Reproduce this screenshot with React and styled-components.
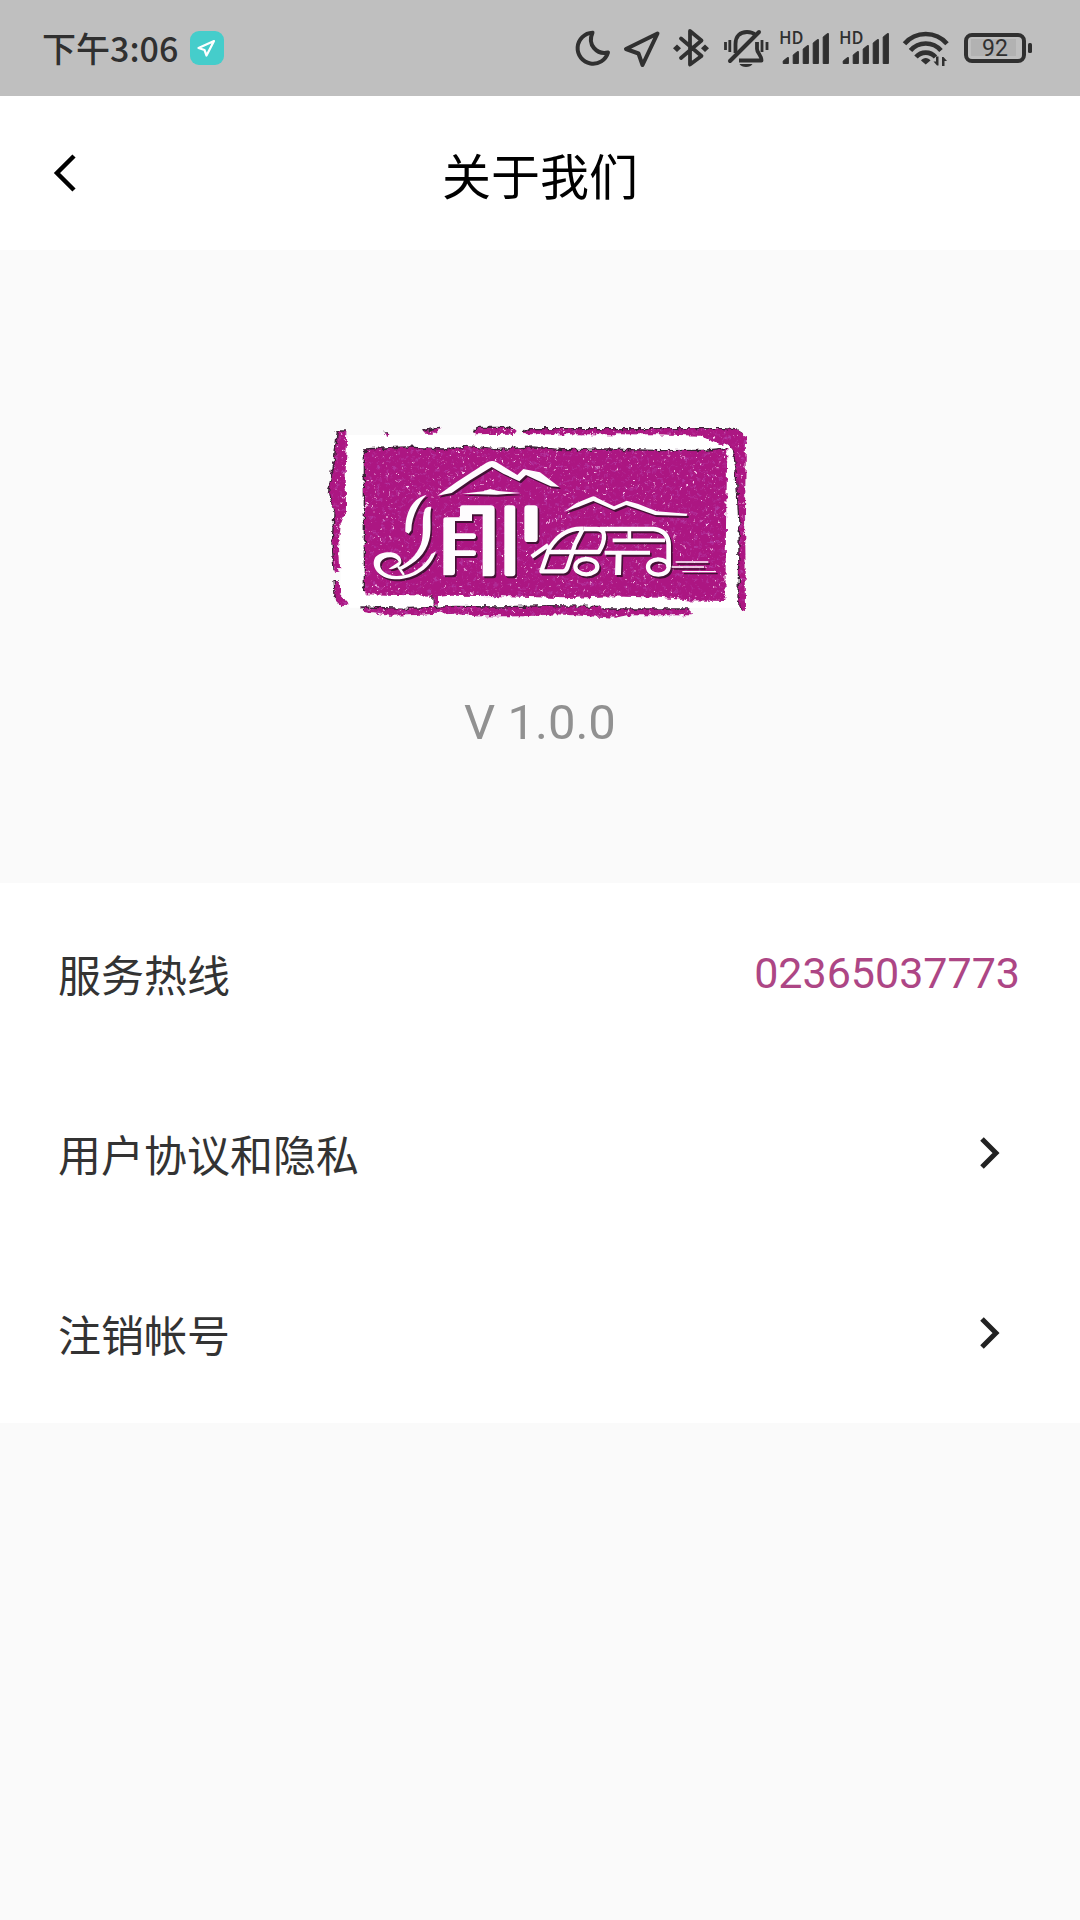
import React from 'react';
import styled, { createGlobalStyle } from 'styled-components';

const rows = [
    { id: 'terms', label: '用户协议和隐私' },
    { id: 'close', label: '注销帐号' },
]

const barTops = [33, 27, 21, 15, 9]

function Signal() {
    return (
        <Glyph $w={50} viewBox="0 0 50 48">
            <HdText x="-1" y="20">HD</HdText>
            {barTops.map((top, i) => (
                <path key={top} d={`M${3.2 + i * 10} 39.500V${top + 4}L${7.5 + i * 10} ${top + 0.5}h.900V39.500z`} stroke="#303030" strokeLinejoin="round" />
            ))}
        </Glyph>
    )
}

function StatusBar() {
    return (
        <StatusRow>
            <StatusGroup $gap={12}>
                <Clock>下午3:06</Clock>
                <Badge viewBox="0 0 34 34">
                    <path d="M24 10 8.500 17l6 2 2 5.500z" fill="none" stroke="#fff" strokeWidth="2.200" strokeLinejoin="round" />
                </Badge>
            </StatusGroup>
            <StatusGroup $gap={10}>
                <Glyph $w={38} viewBox="0 0 38 48">
                    <path d="M18.500 8.700A15.500 15.500 0 1 0 34 28.500C23 31 13 21 18.500 8.700z" fill="none" stroke="#303030" strokeWidth="4" strokeLinejoin="round" />
                </Glyph>
                <Glyph $w={40} viewBox="0 0 40 48">
                    <path d="M35.500 9.500 4 25l12.500 4.500L20.500 41z" fill="none" stroke="#303030" strokeWidth="4" strokeLinejoin="round" />
                </Glyph>
                <Glyph $w={38} viewBox="0 0 38 48">
                    <path d="M9 14.500 29.500 32 18 40.500V7l11.500 9.500L9 34" fill="none" stroke="#303030" strokeWidth="3.800" strokeLinejoin="round" strokeLinecap="round" />
                    <path d="M1 24.200l4-3.700 4 3.700-4 3.700zM29 24.200l4-3.700 4 3.700-4 3.700z" />
                </Glyph>
                <Glyph $w={50} viewBox="0 0 50 48">
                    <g fill="none" stroke="#303030">
                        <path d="M5.500 18v8M9.800 16v12M42 16v12M47 18v8" strokeWidth="2.800" />
                        <path d="M15.500 29V20C15.500 12 20 8 27 8c4 0 6.500 1 8.500 3" strokeWidth="3.800" />
                        <path d="M37 18v7c0 4 4.500 6 4.500 11.500H19" strokeWidth="3.800" strokeLinejoin="round" />
                        <path d="M10 37 39 8" strokeWidth="4" strokeLinecap="round" />
                    </g>
                    <path d="M19.500 40h13c-2 4-11 4-13 0z" />
                </Glyph>
                <Signal />
                <Signal />
                <Glyph $w={52} viewBox="0 0 52 48">
                    <g fill="none" stroke="#303030" strokeWidth="4.600">
                        <path d="M4.500 19.700A28 28 0 0 1 47 19.700" />
                        <path d="M10.500 26.500A20 20 0 0 1 41 26.500" />
                        <path d="M16 33a13 13 0 0 1 19.500 0" />
                    </g>
                    <path d="M25.700 40.500 21 36.500c2-3.500 7.500-3.500 9.500 0z" />
                    <path d="M38.500 32.500v9h-1.500L33.500 37.500h2.500v-5zM42 42v-9H43.500l3.500 4H44.500v5z" />
                </Glyph>
                <Glyph $w={72} viewBox="0 0 72 48">
                    <rect x="4" y="11" width="58" height="26" rx="6" fill="none" stroke="#303030" strokeWidth="4" />
                    <rect x="9" y="15" width="45" height="17" fill="#b2b2b2" />
                    <rect x="66" y="19" width="4" height="10" rx="1.500" />
                    <BatteryText x="33" y="32" textAnchor="middle">92</BatteryText>
                </Glyph>
            </StatusGroup>
        </StatusRow>
    )
}

// white strokes of the seal, drawn twice: once as shadow, once on top
function SealStrokes() {
    return (
        <g fill="none" strokeLinejoin="round">
            <g fill="currentColor" stroke="none">
                <path d="M382 254 440 213 528 156Q545 145 560 154L622 192 640 174 690 184 748 228 722 226 680 207 648 192 628 211 580 188 545 168 480 208 425 246Z" />
                <path d="M455 248 520 241 540 234 565 240 632 246 560 251Z" />
                <path d="M350 251C305 262 284 310 286 362L296 368 304 358C304 320 325 275 350 251Z" />
                <path d="M344 296q4-10 20-9c-7 32 3 66-7 101-10 40-40 68-82 88l-8-7c38-20 62-48 69-82 6-33-2-62 8-91z" />
                <path d="M378 421c-14 50-66 86-124 84-50-2-74-40-58-66 16-20 74-24 78 10 2 16-22 28-38 24l30-20c-6-18-44-20-54 0-8 20 14 40 44 42 50 2 88-28 108-66z" />
                <path d="M400 325q0-6 8-6h42v-28q0-8 8-8h84q12 0 12 12v192q0 9-9 9h-27V310h-32v20h-51v37h54q9 0 9 9t-9 8h-54v34h54q9 0 9 9t-9 8h-54v49q0 9-9 9h-26z" />
                <rect x="583" y="283" width="33" height="213" rx="9" />
                <rect x="643" y="283" width="40" height="110" rx="10" />
                <path d="M762 302 800 276 845 257Q854 254 862 261L912 286 950 269 985 279 1040 301 1132 308 1130 315 1035 312 975 291 948 282 912 297 850 270 805 288Z" />
            </g>
            <g stroke="currentColor" strokeWidth="13">
                <path d="M665 437 715 402M820 353C765 350 735 385 718 412L694 481H760Q768 480 772 470L795 400 818 355" />
                <path d="M712 423H866Q884 395 882 372 880 354 860 354H820" />
                <ellipse cx="829" cy="467" rx="33" ry="23" />
                <path d="M870 354H1030Q1074 358 1076 400V468" strokeWidth="14" />
                <path d="M908 388H1065M958 358V386" strokeWidth="11" />
                <path d="M884 425H1020" strokeWidth="12" />
                <path d="M926 425 924 492" strokeWidth="18" />
                <ellipse cx="1045" cy="468" rx="31" ry="23" />
                <path d="M264 466 282 492" strokeWidth="7" />
                <path d="M1097 453H1195M1085 468H1182M1117 482H1218" strokeWidth="4" />
            </g>
        </g>
    )
}

function Seal() {
    return (
        <SealSvg viewBox="0 0 1350 660" role="img" aria-label="渝愉行">
            <defs>
                <filter id="rough" x="-5%" y="-5%" width="110%" height="110%">
                    <feTurbulence type="fractalNoise" baseFrequency="0.060" numOctaves="3" seed="4" result="n" />
                    <feDisplacementMap in="SourceGraphic" in2="n" scale="18" xChannelSelector="R" yChannelSelector="G" />
                </filter>
                <filter id="grain" x="0" y="0" width="100%" height="100%">
                    <feTurbulence type="fractalNoise" baseFrequency="0.110" numOctaves="2" seed="9" />
                    <feColorMatrix values="0 0 0 0 0.93  0 0 0 0 0.62  0 0 0 0 0.86  8 0 0 0 -5.500" result="light" />
                    <feComposite in="light" in2="SourceGraphic" operator="in" />
                </filter>
                <filter id="dark" x="0" y="0" width="100%" height="100%">
                    <feTurbulence type="fractalNoise" baseFrequency="0.080" numOctaves="3" seed="22" />
                    <feColorMatrix values="0 0 0 0 0.45  0 0 0 0 0.04  0 0 0 0 0.36  0 4 0 0 -2.300" result="d" />
                    <feComposite in="d" in2="SourceGraphic" operator="in" />
                </filter>
                <g id="ink">
                    <path d="M165 116 290 110 400 116 470 108 560 118 670 110 760 118 900 116 1060 121 1180 120 1252 113 1248 340 1246 570 1130 568 1050 560 900 556 760 562 600 556 420 554 384 558 384 584 372 584 370 554 165 550Z" />
                    <path d="M84 62H112L107 180 108 300 92 340 84 410 88 482 74 482 68 400 74 310 58 240 74 160Z" />
                    <path d="M74 514H90L90 550 116 580 98 586 78 566Z" />
                    <path d="M224 68H242L236 78ZM340 62 396 50 378 68 344 68ZM492 62 505 51H610L620 60 608 76 600 68 495 70Z" />
                    <path d="M642 68 660 55H1245Q1300 56 1308 80L1305 300 1308 600 1295 598 1286 560 1290 360 1280 180 1272 120 1255 100 1232 102 1170 74 1040 70H645Z" />
                    <path d="M158 590 300 594 440 588 560 590 720 586 870 588 880 596H1142V613H950L915 620 740 610 640 616 500 616 420 606 320 612 240 614 160 603Z" />
                </g>
            </defs>
            <path d="M92 72H1290V590H120L92 560Z" fill="#fff" />
            <g filter="url(#rough)">
                <use href="#ink" fill="#3d2338" x="-4" y="-4" />
                <use href="#ink" fill="#ac1582" />
            </g>
            <g filter="url(#rough)"><use href="#ink" filter="url(#dark)" /></g>
            <g filter="url(#rough)"><use href="#ink" filter="url(#grain)" /></g>
            <g color="#431235" transform="translate(5 6)"><SealStrokes /></g>
            <g color="#fefcfe"><SealStrokes /></g>
        </SealSvg>
    )
}

export default function AboutPage() {
    return (
        <>
        <GlobalStyle />
        <StatusBar />
        <Header>
            <BackButton aria-label="返回">
                <svg width="24" height="38" viewBox="0 0 24 38"><path d="M22 2 5 19 22 36" fill="none" stroke="#000" strokeWidth="4.500" /></svg>
            </BackButton>
            <Title>关于我们</Title>
        </Header>
        <LogoSection>
            <Seal />
            <Version>V 1.0.0</Version>
        </LogoSection>
        <List>
            <Row href="tel:02365037773">
                <span>服务热线</span>
                <Phone>02365037773</Phone>
            </Row>
            {rows.map((row) => (
                <Row key={row.id} href={`#${row.id}`}>
                    <span>{row.label}</span>
                    <Chevron viewBox="0 0 20 34"><path d="M2 3 16 17 2 31" fill="none" stroke="#222" strokeWidth="5" /></Chevron>
                </Row>
            ))}
        </List>
        </>
    )
}

const GlobalStyle = createGlobalStyle`
    body {
        margin: 0;
        background-color: #fafafa;
        font-family: Roboto, "Noto Sans CJK SC", sans-serif;
    }
    `
const StatusRow = styled.div`
    display: flex;
    align-items: center;
    justify-content: space-between;
    height: 96px;
    padding: 0 46px 0 42px;
    background-color: #bfbfbf;
    box-sizing: border-box;
    `
const StatusGroup = styled.div`
    display: flex;
    align-items: center;
    gap: ${(props) => props.$gap}px;
    `
const Clock = styled.span`
    font-family: "Noto Sans CJK SC", sans-serif;
    font-size: 34px;
    font-weight: 500;
    line-height: 48px;
    color: #303030;
    `
const Badge = styled.svg`
    width: 34px;
    height: 34px;
    border-radius: 9px;
    background-color: #45cdcb;
    `
const Glyph = styled.svg`
    width: ${(props) => props.$w}px;
    height: 48px;
    fill: #303030;
    `
const HdText = styled.text`
    font-family: "Noto Sans CJK SC", sans-serif;
    font-size: 17px;
    font-weight: 500;
    `
const BatteryText = styled.text`
    font-family: Roboto, sans-serif;
    font-size: 23px;
    font-weight: 400;
    `
const Header = styled.header`
    display: grid;
    grid-template-columns: 1fr auto 1fr;
    align-items: center;
    height: 154px;
    padding: 0 52px;
    background-color: #fff;
    box-sizing: border-box;
    `
const BackButton = styled.button`
    display: flex;
    justify-self: start;
    padding: 0;
    border: none;
    background: none;
    `
const Title = styled.h1`
    margin: 0;
    padding-top: 12px;
    font-size: 49px;
    font-weight: 400;
    line-height: 72px;
    color: #000;
    `
const LogoSection = styled.section`
    display: flex;
    flex-direction: column;
    align-items: center;
    padding: 161px 0 132px;
    `
const SealSvg = styled.svg`
    width: 450px;
    height: 220px;
    margin-right: 10px;
    `
const Version = styled.p`
    margin: 64px 0 0;
    font-size: 49px;
    line-height: 56px;
    color: #919191;
    `
const List = styled.nav`
    background-color: #fff;
    `
const Row = styled.a`
    display: flex;
    align-items: center;
    justify-content: space-between;
    height: 180px;
    padding: 0 60px 0 58px;
    font-size: 43px;
    color: #333;
    text-decoration: none;
    box-sizing: border-box;
    `
const Phone = styled.span`
    color: #ad4685;
    `
const Chevron = styled.svg`
    width: 20px;
    height: 34px;
    margin-right: 20px;
    `
